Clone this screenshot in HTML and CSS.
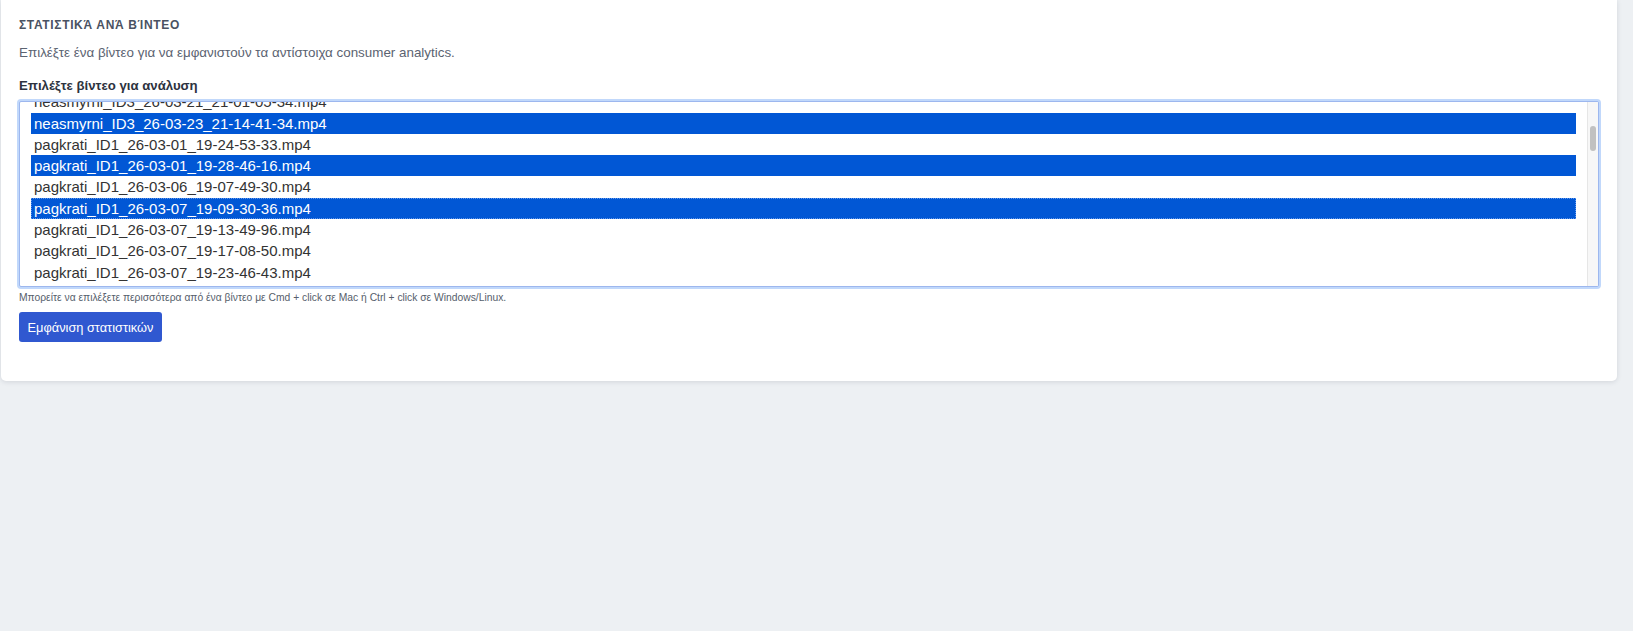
FILE: index.html
```html
<!DOCTYPE html>
<html lang="el">
<head>
<meta charset="utf-8">
<title>Στατιστικά ανά βίντεο</title>
<link rel="stylesheet" href="styles.css">
</head>
<body>
<div class="page">
  <section class="card">
    <h2 class="card-title">ΣΤΑΤΙΣΤΙΚΆ ΑΝΆ ΒΊΝΤΕΟ</h2>
    <p class="card-desc">Επιλέξτε ένα βίντεο για να εμφανιστούν τα αντίστοιχα consumer analytics.</p>
    <label class="field-label">Επιλέξτε βίντεο για ανάλυση</label>
    <div class="listbox">
      <div class="list">
        <div class="opt first">neasmyrni_ID3_26-03-21_21-01-05-34.mp4</div>
        <div class="opt sel">neasmyrni_ID3_26-03-23_21-14-41-34.mp4</div>
        <div class="opt">pagkrati_ID1_26-03-01_19-24-53-33.mp4</div>
        <div class="opt sel">pagkrati_ID1_26-03-01_19-28-46-16.mp4</div>
        <div class="opt">pagkrati_ID1_26-03-06_19-07-49-30.mp4</div>
        <div class="opt sel focus">pagkrati_ID1_26-03-07_19-09-30-36.mp4</div>
        <div class="opt">pagkrati_ID1_26-03-07_19-13-49-96.mp4</div>
        <div class="opt">pagkrati_ID1_26-03-07_19-17-08-50.mp4</div>
        <div class="opt">pagkrati_ID1_26-03-07_19-23-46-43.mp4</div>
      </div>
      <div class="scrollbar"><div class="thumb"></div></div>
    </div>
    <p class="help">Μπορείτε να επιλέξετε περισσότερα από ένα βίντεο με Cmd + click σε Mac ή Ctrl + click σε Windows/Linux.</p>
    <button class="btn" type="button">Εμφάνιση στατιστικών</button>
  </section>
</div>
</body>
</html>
```

FILE: styles.css
```css
* { box-sizing: border-box; }

html, body {
  margin: 0;
  padding: 0;
}

body {
  background: #edf0f3;
  font-family: "Liberation Sans", Arial, sans-serif;
  height: 631px;
  overflow: hidden;
}

.page {
  padding: 0 16px 0 1px;
}

.card {
  background: #ffffff;
  border-radius: 0 0 5px 5px;
  box-shadow: 0 1px 5px rgba(30, 40, 60, 0.13);
  padding: 17px 18px 39px 18px;
}

.card-title {
  margin: 0 0 11px 0;
  font-size: 12px;
  line-height: 16px;
  font-weight: 700;
  letter-spacing: 0.055em;
  color: #4a5262;
}

.card-desc {
  margin: 0 0 15px 0;
  font-size: 13.4px;
  line-height: 18px;
  color: #5b6371;
}

.field-label {
  display: block;
  margin: 0 0 6px 0;
  font-size: 13.2px;
  line-height: 18px;
  font-weight: 700;
  color: #2d3340;
}

.listbox {
  display: grid;
  grid-template-columns: 1fr 11px;
  height: 186px;
  border: 1px solid #9db7ee;
  box-shadow: 0 0 0 2px #c1d8fb;
  border-radius: 2px;
  background: #ffffff;
  overflow: hidden;
}

.list {
  padding: 0 11px;
  overflow: hidden;
}

.opt {
  height: 21.3px;
  line-height: 21.3px;
  padding-left: 3px;
  font-size: 15px;
  color: #333333;
  white-space: nowrap;
}

.opt.first {
  margin-top: -10.8px;
}

.opt.sel {
  background: #0157d5;
  color: #ffffff;
}

.opt.focus {
  outline: 1px dotted #5d96ee;
  outline-offset: -1px;
}

.scrollbar {
  background: #f7f7f7;
  border-left: 1px solid #e6e6e6;
  padding: 24px 2px 0 2px;
}

.thumb {
  width: 6px;
  height: 25px;
  border-radius: 3px;
  background: #c1c1c1;
}

.help {
  margin: 4px 0 8px 0;
  font-size: 10.3px;
  line-height: 13px;
  color: #565e6b;
}

.btn {
  display: block;
  width: 143px;
  height: 30px;
  padding: 0;
  border: none;
  border-radius: 3px;
  background: #3058d0;
  color: #ffffff;
  font-family: "Liberation Sans", Arial, sans-serif;
  font-size: 12.8px;
  font-weight: 500;
  cursor: pointer;
}
```
